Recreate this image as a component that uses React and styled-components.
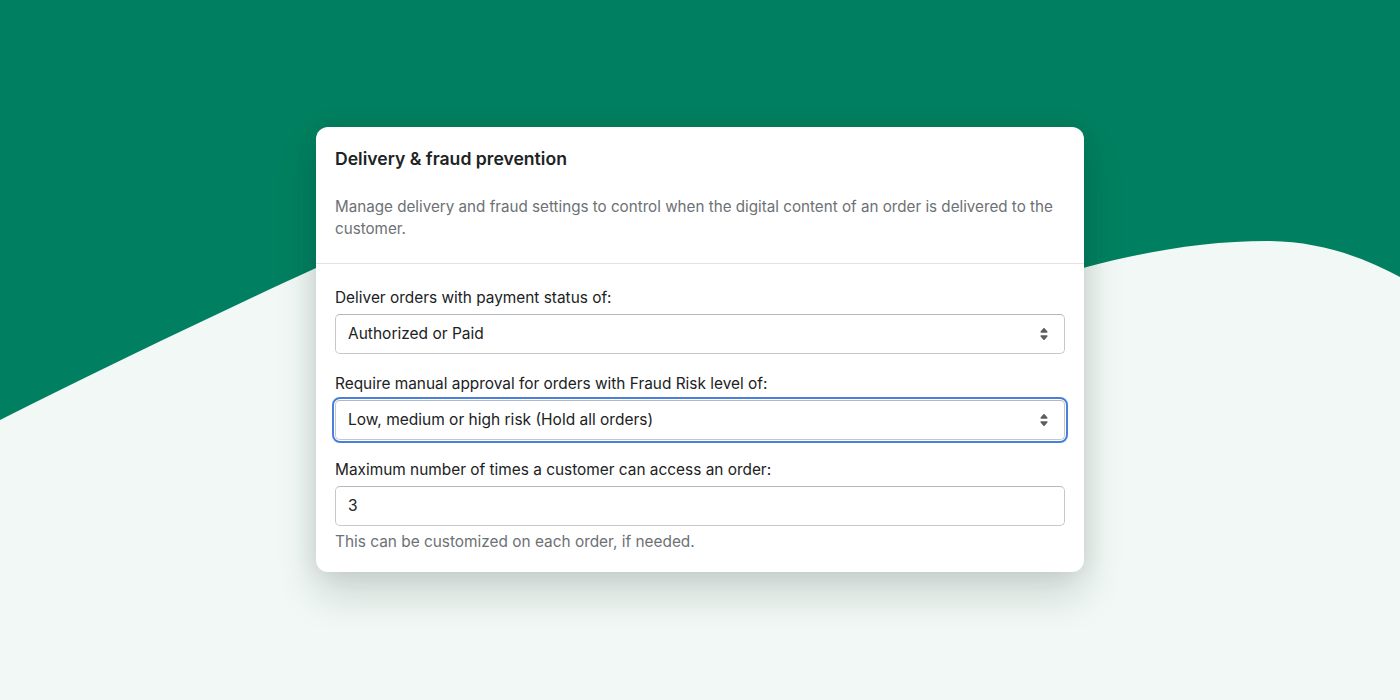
import React from 'react';
import styled, { createGlobalStyle } from 'styled-components';

const GlobalStyle = createGlobalStyle`
  html, body {
    margin: 0;
    padding: 0;
  }
  body {
    font-family: Inter, 'Noto Sans', sans-serif;
    -webkit-font-smoothing: antialiased;
  }
`;

const Page = styled.div`
  display: grid;
  width: 1400px;
  height: 700px;
  overflow: hidden;
  background: #008060;
`;

const Backdrop = styled.svg`
  grid-area: 1 / 1;
  width: 1400px;
  height: 700px;
  display: block;
`;

const Center = styled.div`
  grid-area: 1 / 1;
  display: flex;
  align-items: center;
  justify-content: center;
  z-index: 1;
`;

const Card = styled.div`
  width: 768px;
  margin-top: -2px;
  background: #fff;
  border-radius: 12px;
  box-shadow: 0 22px 40px rgba(18, 40, 32, 0.16), 0 0 22px rgba(18, 40, 32, 0.1);
  overflow: hidden;
`;

const Header = styled.div`
  padding: 20px 19px 23px;
  border-bottom: 1px solid #e1e3e5;
`;

const Title = styled.h2`
  margin: 0;
  font-size: 17.6px;
  line-height: 24px;
  font-weight: 600;
  color: #202223;
`;

const Description = styled.p`
  margin: 25px 0 0;
  font-size: 15.2px;
  line-height: 22px;
  color: #6d7175;
`;

const Body = styled.div`
  padding: 24px 19px 20px;
  display: flex;
  flex-direction: column;
  gap: 20px;
`;

const Field = styled.div`
  display: flex;
  flex-direction: column;
`;

const Label = styled.label`
  font-size: 15.4px;
  line-height: 20px;
  color: #202223;
  margin-bottom: 6px;
`;

const Box = styled.div`
  height: 40px;
  box-sizing: border-box;
  display: flex;
  align-items: center;
  justify-content: space-between;
  padding: 0 8px 0 12px;
  border: 1px solid #c4c8cc;
  border-top-color: #b3b8bd;
  border-radius: 5px;
  background: #fff;
  font-size: 15.5px;
  color: #202223;
  outline: ${p => (p.$focused ? '2px solid #4a7fdc' : 'none')};
  outline-offset: 1px;
`;

const Help = styled.div`
  margin-top: 6px;
  font-size: 15.4px;
  line-height: 20px;
  color: #6d7175;
`;

const SelectArrows = () => (
  <svg width="24" height="24" viewBox="0 0 20 20" fill="#5c5f62">
    <path d="M7.676 9h4.648c.563 0 .879-.603.53-1.014l-2.323-2.746a.708.708 0 0 0-1.062 0l-2.324 2.746c-.347.411-.032 1.014.531 1.014Zm4.648 2h-4.648c-.563 0-.878.603-.53 1.014l2.323 2.746c.27.32.792.32 1.062 0l2.323-2.746c.349-.411.033-1.014-.53-1.014Z" />
  </svg>
);

const fields = [
  { label: 'Deliver orders with payment status of:', value: 'Authorized or Paid', select: true },
  { label: 'Require manual approval for orders with Fraud Risk level of:', value: 'Low, medium or high risk (Hold all orders)', select: true, focused: true },
  { label: 'Maximum number of times a customer can access an order:', value: '3', help: 'This can be customized on each order, if needed.' },
];

export default function App() {
  return (
    <Page>
      <GlobalStyle />
      <Backdrop viewBox="0 0 1400 700">
        <path
          fill="#f1f8f5"
          d="M0 420 C110 365, 220 312, 316 268 C500 185, 850 330, 1083 268 C1150 250, 1210 241, 1267 241 C1320 241, 1365 258, 1400 277 L1400 700 L0 700 Z"
        />
      </Backdrop>
      <Center>
        <Card>
          <Header>
            <Title>Delivery &amp; fraud prevention</Title>
            <Description>
              Manage delivery and fraud settings to control when the digital content of an order is delivered to the customer.
            </Description>
          </Header>
          <Body>
            {fields.map(f => (
              <Field key={f.label}>
                <Label>{f.label}</Label>
                <Box $focused={f.focused}>
                  <span>{f.value}</span>
                  {f.select && <SelectArrows />}
                </Box>
                {f.help && <Help>{f.help}</Help>}
              </Field>
            ))}
          </Body>
        </Card>
      </Center>
    </Page>
  );
}
